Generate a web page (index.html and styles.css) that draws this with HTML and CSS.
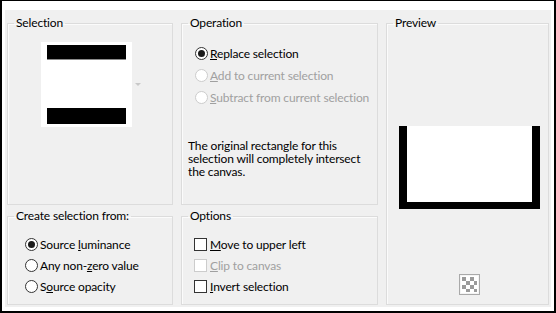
FILE: index.html
```html
<!DOCTYPE html>
<html lang="en">
<head>
    <meta charset="UTF-8">
    <title>Selection From Mask</title>
    <link rel="stylesheet" href="styles.css">
</head>
<body>
    <div class="window">
        <div class="dialog">
            <fieldset class="group group-selection">
                <legend>Selection</legend>
                <div class="thumb-row">
                    <div class="thumb">
                        <div class="thumb-bar"></div>
                        <div class="thumb-bar"></div>
                    </div>
                    <span class="thumb-arrow"></span>
                </div>
            </fieldset>

            <fieldset class="group group-operation">
                <legend>Operation</legend>
                <div class="choices">
                    <label class="choice"><span class="radio checked"></span><span><u>R</u>eplace selection</span></label>
                    <label class="choice disabled"><span class="radio"></span><span><u>A</u>dd to current selection</span></label>
                    <label class="choice disabled"><span class="radio"></span><span><u>S</u>ubtract from current selection</span></label>
                </div>
                <p class="note">The original rectangle for this selection will completely intersect the canvas.</p>
            </fieldset>

            <fieldset class="group group-preview">
                <legend>Preview</legend>
                <div class="preview-area">
                    <div class="preview-frame"></div>
                    <span class="checker">
                        <svg width="21" height="21" viewBox="0 0 21 21">
                            <rect x="0.5" y="0.5" width="20" height="20" fill="#f4f4f4" stroke="#a9a9a9"/>
                            <rect x="2" y="2" width="17" height="17" fill="#ffffff"/>
                            <g fill="#9a9a9a">
                                <rect x="3" y="3" width="4" height="4"/>
                                <rect x="11" y="3" width="4" height="4"/>
                                <rect x="7" y="7" width="4" height="4"/>
                                <rect x="15" y="7" width="3" height="4"/>
                                <rect x="3" y="11" width="4" height="4"/>
                                <rect x="11" y="11" width="4" height="4"/>
                                <rect x="7" y="15" width="4" height="3"/>
                                <rect x="15" y="15" width="3" height="3"/>
                            </g>
                        </svg>
                    </span>
                </div>
            </fieldset>

            <fieldset class="group group-source">
                <legend>Create selection from:</legend>
                <div class="choices">
                    <label class="choice"><span class="radio checked"></span><span>Source <u>l</u>uminance</span></label>
                    <label class="choice"><span class="radio"></span><span>Any non-<u>z</u>ero value</span></label>
                    <label class="choice"><span class="radio"></span><span>S<u>o</u>urce opacity</span></label>
                </div>
            </fieldset>

            <fieldset class="group group-options">
                <legend>Options</legend>
                <div class="choices">
                    <label class="choice"><span class="check"></span><span><u>M</u>ove to upper left</span></label>
                    <label class="choice disabled"><span class="check"></span><span><u>C</u>lip to canvas</span></label>
                    <label class="choice"><span class="check"></span><span><u>I</u>nvert selection</span></label>
                </div>
            </fieldset>
        </div>
    </div>
</body>
</html>
```

FILE: styles.css
```css
:root {
    --panel: #f0f0f0;
    --group-line: #dcdcdc;
    --text: #000000;
    --disabled: #a0a0a0;
    --control-border: #333333;
}

* {
    margin: 0;
    padding: 0;
    box-sizing: border-box;
}

body {
    font-family: Lato, 'Liberation Sans', sans-serif;
    font-size: 12px;
    letter-spacing: -0.15px;
    color: var(--text);
    background: #ffffff;
}

.window {
    width: 556px;
    height: 313px;
    border: 2px solid #000;
    border-top-width: 1px;
    background: #ffffff;
    padding: 9px 3px 4px 3px;
}

.dialog {
    height: 100%;
    background: var(--panel);
    padding: 5px 2px 2px 2px;
    display: grid;
    grid-template-columns: 166px 197px 163px;
    grid-template-rows: 190px 97px;
    column-gap: 8px;
    row-gap: 3px;
}

.group {
    border: 1px solid var(--group-line);
    box-shadow: inset 1px 1px 0 #fbfbfb;
    min-width: 0;
}

.group legend {
    margin-left: 6px;
    padding: 0 2px;
    line-height: 16px;
}

.group-preview {
    grid-column: 3;
    grid-row: 1 / span 2;
}

/* selection thumbnail */
.thumb-row {
    display: flex;
    align-items: center;
    margin: 11px 0 0 33px;
}

.thumb {
    width: 91px;
    height: 85px;
    background: #fff;
    padding: 3px 6px;
    display: flex;
    flex-direction: column;
    justify-content: space-between;
}

.thumb-bar {
    height: 16px;
    background: #000;
}

.thumb-bar:first-child {
    height: 15px;
    border-bottom: 1px solid #8a8a8a;
}

.thumb-arrow {
    margin-left: 3px;
    border-left: 3px solid transparent;
    border-right: 3px solid transparent;
    border-top: 3px solid #c8c8c8;
}

/* radio and check rows */
.choices {
    display: flex;
    flex-direction: column;
}

.choice {
    display: flex;
    align-items: center;
    gap: 2px;
    height: 22px;
    white-space: nowrap;
}

.choice.disabled {
    color: var(--disabled);
}

.radio,
.check {
    width: 13px;
    height: 13px;
    background: #fff;
    border: 1px solid var(--control-border);
    flex: none;
    display: flex;
    align-items: center;
    justify-content: center;
}

.radio {
    border-radius: 50%;
}

.radio.checked::after {
    content: "";
    width: 7px;
    height: 7px;
    border-radius: 50%;
    background: #1a1a1a;
}

.disabled .radio,
.disabled .check {
    border-color: #cccccc;
}

.group-operation .choices {
    margin: 11px 0 0 13px;
}

.note {
    margin: 31px 0 0 6px;
    line-height: 13px;
    padding-right: 6px;
}

.group-source .choices {
    margin: 10px 0 0 17px;
}

.group-source .choice,
.group-options .choice {
    height: 21px;
}

.group-options .choices {
    margin: 10px 0 0 12px;
}

.group-options .choice {
    gap: 3px;
}

/* preview */
.preview-area {
    display: flex;
    flex-direction: column;
    align-items: center;
    padding: 95px 0 0 4px;
}

.preview-frame {
    width: 141px;
    height: 83px;
    background: #fff;
    border: 8px solid #000;
    border-top: 0;
    border-bottom-width: 7px;
}

.checker {
    display: block;
    margin-top: 65px;
    height: 21px;
}
```
